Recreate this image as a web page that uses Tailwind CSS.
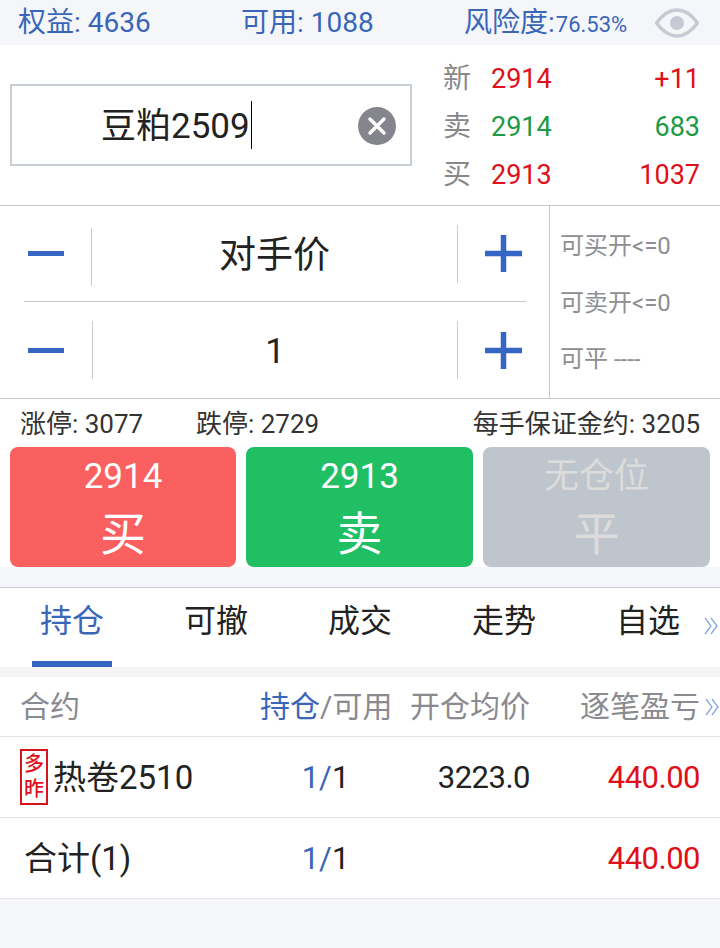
<!DOCTYPE html>
<html lang="zh"><head><meta charset="utf-8">
<script src="https://cdn.jsdelivr.net/npm/@tailwindcss/browser@4"></script>
</head>
<body class="m-0 w-[720px] h-[948px] overflow-hidden bg-[#f5f6fa] font-['Roboto','Noto_Sans_CJK_SC',sans-serif] text-[#222]">
<!-- top -->
<div class="h-[45px] flex items-center pl-[18px] text-[#3a66b8] text-[28px] leading-none">
  <div class="w-[223px] whitespace-nowrap">权益: 4636</div>
  <div class="w-[223px] whitespace-nowrap">可用: 1088</div>
  <div class="w-[191px] whitespace-nowrap flex items-baseline">风险度:<span class="text-[22px] ml-px">76.53%</span></div>
  <svg class="w-[44px] h-[30px]" viewBox="0 0 44 30"><path d="M1.5 15 C8 6 15 2 22 2 C29 2 36 6 42.5 15 C36 24 29 28 22 28 C15 28 8 24 1.5 15 Z" fill="none" stroke="#c9c9d6" stroke-width="3.5"/><circle cx="22" cy="15" r="7" fill="#c9c9d6"/></svg>
</div>
<!-- quote -->
<div class="h-[160px] bg-white flex items-center pl-[10px]">
  <div class="w-[402px] h-[82px] border-2 border-[#c8cfd6] flex items-center relative">
    <div class="pl-[89px] text-[35px] leading-none flex items-center"><span class="pt-[3px]">豆粕2509</span><span class="ml-[1px] w-px h-[48px] bg-black"></span></div>
    <div class="absolute left-[346px] top-[21px] w-[38px] h-[38px] rounded-full bg-[#85858d] flex items-center justify-center">
      <svg class="w-[20px] h-[20px]" viewBox="0 0 20 20"><path d="M3 3 L17 17 M17 3 L3 17" stroke="#fff" stroke-width="3.4" stroke-linecap="round"/></svg>
    </div>
  </div>
  <div class="ml-[31px] w-[257px] text-[27px] leading-[48px] mt-[4px]">
    <div class="h-[48px] flex"><span class="w-[48px] text-[28px] text-[#888]">新</span><span class="text-[#e0101a]">2914</span><span class="ml-auto text-[#e0101a]">+11</span></div>
    <div class="h-[48px] flex"><span class="w-[48px] text-[28px] text-[#888]">卖</span><span class="text-[#1c9a44]">2914</span><span class="ml-auto text-[#1c9a44]">683</span></div>
    <div class="h-[48px] flex"><span class="w-[48px] text-[28px] text-[#888]">买</span><span class="text-[#e0101a]">2913</span><span class="ml-auto text-[#e0101a]">1037</span></div>
  </div>
</div>
<!-- stepper -->
<div class="h-[194px] bg-white border-y border-[#c4c8cc] flex">
  <div class="w-[549px] shrink-0 flex flex-col">
    <div class="h-[96px] mx-[23px] ml-[24px] border-b border-[#c4c8cc] flex items-center">
      <div class="w-[67px] flex"><span class="ml-[4px] w-[36px] h-[5px] bg-[#3566c4]"></span></div>
      <span class="w-px h-[58px] bg-[#ccc] mt-[6px]"></span>
      <div class="w-[365px] pt-[3px] text-center text-[37px] leading-none">对手价</div>
      <span class="w-px h-[58px] bg-[#ccc]"></span>
      <svg class="ml-[27px] w-[37px] h-[37px]" viewBox="0 0 37 37"><path d="M0 18.5H37M18.5 0V37" stroke="#3566c4" stroke-width="5.5"/></svg>
    </div>
    <div class="h-[96px] mx-[24px] flex items-center">
      <div class="w-[68px] flex"><span class="ml-[4px] w-[36px] h-[5px] bg-[#3566c4]"></span></div>
      <span class="w-px h-[58px] bg-[#ccc]"></span>
      <div class="w-[364px] pt-[2px] text-center text-[35px] leading-none">1</div>
      <span class="w-px h-[58px] bg-[#ccc]"></span>
      <svg class="ml-[27px] w-[37px] h-[37px]" viewBox="0 0 37 37"><path d="M0 18.5H37M18.5 0V37" stroke="#3566c4" stroke-width="5.5"/></svg>
    </div>
  </div>
  <div class="flex-1 border-l border-[#c4c8cc] pl-[10px] pt-[12px] text-[24px] leading-[56.5px] text-[#8e8e93]">
    <div>可买开&lt;=0</div><div>可卖开&lt;=0</div><div>可平 ----</div>
  </div>
</div>
<!-- limits -->
<div class="h-[48px] bg-white flex items-center pl-[20px] pr-[20px] pt-[2px] text-[26px] leading-none text-[#333]">
  <span class="w-[176px]">涨停: 3077</span><span>跌停: 2729</span><span class="ml-auto">每手保证金约: 3205</span>
</div>
<!-- buttons -->
<div class="h-[120px] bg-white flex gap-[10px] px-[10px] text-center">
  <div class="w-[226px] rounded-[8px] bg-[#fa6060] text-white flex flex-col items-center"><span class="text-[35px] leading-none mt-[12px]">2914</span><span class="text-[46px] leading-none mt-[17px]">买</span></div>
  <div class="w-[227px] rounded-[8px] bg-[#20bf63] text-white flex flex-col items-center"><span class="text-[35px] leading-none mt-[12px]">2913</span><span class="text-[46px] leading-none mt-[17px]">卖</span></div>
  <div class="w-[227px] rounded-[8px] bg-[#bfc5cd] text-[#dcdcdc] flex flex-col items-center"><span class="text-[35px] leading-none mt-[12px]">无仓位</span><span class="text-[46px] leading-none mt-[17px]">平</span></div>
</div>
<!-- tabs -->
<div class="mt-[20px] h-[80px] bg-white border-t border-[#c4c8d0] flex relative text-[32px]">
  <div class="w-[144px] h-[79px] relative flex justify-center pt-[11px] text-[#3a66b8] leading-[44px]">持仓<span class="absolute left-[32px] bottom-0 w-[80px] h-[6px] bg-[#3566c4]"></span></div>
  <div class="w-[144px] flex justify-center pt-[11px] leading-[44px]">可撤</div>
  <div class="w-[144px] flex justify-center pt-[11px] leading-[44px]">成交</div>
  <div class="w-[144px] flex justify-center pt-[11px] leading-[44px]">走势</div>
  <div class="w-[144px] flex justify-center pt-[11px] leading-[44px]">自选</div>
  <svg class="absolute left-[704px] top-[29px] w-[15px] h-[18px]" viewBox="0 0 15 18"><path d="M1 1L7 9L1 17M7 1L13 9L7 17" fill="none" stroke="#8aa6dc" stroke-width="1.3"/></svg>
</div>
<div class="h-[10px] bg-[#f5f5f5]"></div>
<!-- table -->
<div class="bg-white text-[33px]">
  <div class="h-[60px] border-b border-[#e2e3e6] flex items-center pl-[20px] text-[30px] text-[#8a8a90] relative">
    <span class="w-[240px]">合约</span><span class="w-[150px]"><span class="text-[#3a66b8]">持仓</span>/可用</span><span class="w-[170px] whitespace-nowrap">开仓均价</span><span class="whitespace-nowrap">逐笔盈亏</span>
    <svg class="absolute left-[705px] top-[21px] w-[15px] h-[18px]" viewBox="0 0 15 18"><path d="M1 1L7 9L1 17M7 1L13 9L7 17" fill="none" stroke="#8aa6dc" stroke-width="1.3"/></svg>
  </div>
  <div class="h-[81px] border-b border-[#e2e3e6] flex items-center pl-[20px] relative">
    <div class="w-[28px] h-[56px] border-2 border-[#d5141c] text-[#e0101a] text-[20px] font-medium leading-[25px] flex flex-col items-center justify-center shrink-0"><span>多</span><span>昨</span></div>
    <span class="w-[213px] pl-[5px] pt-[2px] whitespace-nowrap">热卷2510</span>
    <span class="w-[129px] pt-[2px] text-center text-[31px]"><span class="text-[#3a66b8]">1/</span>1</span>
    <span class="w-[140px] pt-[2px] text-right text-[31px] tracking-[-0.5px]">3223.0</span>
    <span class="w-[170px] pt-[2px] text-right text-[31px] tracking-[-0.5px] text-[#e0101a]">440.00</span>
  </div>
  <div class="h-[81px] border-b border-[#e2e3e6] flex items-center pl-[24px]">
    <span class="w-[237px] pt-[2px]">合计(1)</span>
    <span class="w-[129px] pt-[2px] text-center text-[31px]"><span class="text-[#3a66b8]">1/</span>1</span>
    <span class="w-[140px]"></span>
    <span class="w-[170px] pt-[2px] text-right text-[31px] tracking-[-0.5px] text-[#e0101a]">440.00</span>
  </div>
</div>
</body></html>
